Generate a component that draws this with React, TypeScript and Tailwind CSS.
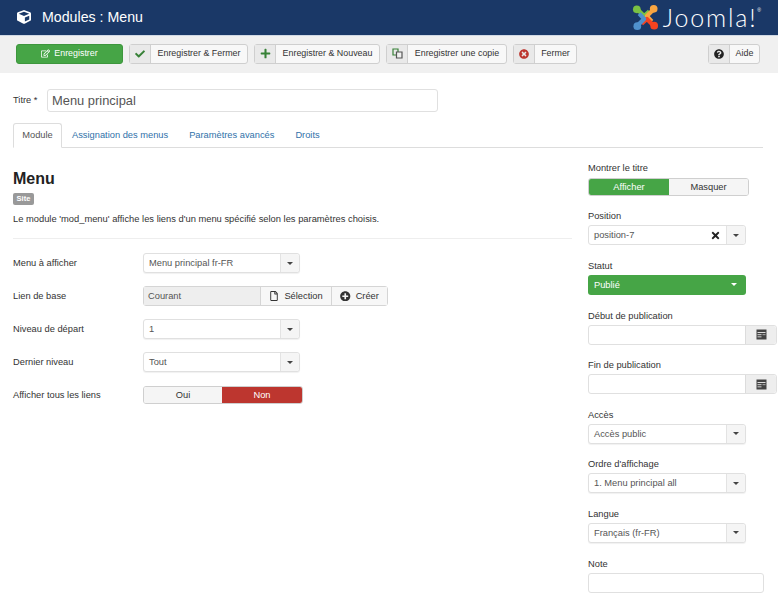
import React from "react";
import { FaCheck, FaPlus, FaTimesCircle, FaQuestionCircle, FaRegEdit, FaRegFile, FaPlusCircle, FaTimes, FaCube } from "react-icons/fa";

function Logo() {
  const arms = ["#7ac143", "#f9a541", "#f44321", "#5091cd"];
  return (
    <svg width="27" height="27" viewBox="0 0 28 28" fill="none">
      {arms.map((c, i) => (
        <g key={c} transform={`rotate(${i * 90} 14 14)`}>
          <path d="M5 5 L12.5 12.5 L18 7.5" stroke={c} strokeWidth="4.4" strokeLinejoin="round" />
          <circle cx="5" cy="5.5" r="4" fill={c} />
        </g>
      ))}
    </svg>
  );
}

function CopyIcon() {
  return (
    <svg width="11" height="11" viewBox="0 0 11 11" fill="none">
      <path d="M1 1 H6 V7 H1 Z" stroke="#378137" strokeWidth="1.2" />
      <path d="M4.5 4 H10 V10 H4.5 Z" stroke="#555" strokeWidth="1.2" fill="#f0f0f0" />
    </svg>
  );
}

function CalendarIcon() {
  return (
    <svg width="11" height="11" viewBox="0 0 11 11">
      <rect x="0.5" y="0.5" width="10" height="10" fill="#444" />
      <rect x="1.5" y="3" width="8" height="1" fill="#ddd" />
      <rect x="1.5" y="5" width="4" height="1.2" fill="#bbb" />
      <rect x="1.5" y="7.2" width="4" height="1.2" fill="#bbb" />
      <rect x="6.5" y="5" width="3" height="1.2" fill="#999" />
    </svg>
  );
}

function Caret() {
  return (
    <span className="w-[19px] flex items-center justify-center bg-[#f5f5f5] border-l border-[#e3e3e3] rounded-r-[3px]">
      <span className="border-x-[3px] border-x-transparent border-t-[3px] border-t-[#444]" />
    </span>
  );
}

function ToolBtn({ icon, label, w }: { icon: React.ReactNode; label: string; w: string }) {
  return (
    <div className={`flex h-[20px] ${w} border border-[#cfcfcf] rounded-[3px] bg-[#f8f8f8] text-[8.9px] text-[#333] items-stretch`}>
      <span className="w-[21px] shrink-0 flex items-center justify-center bg-[#e9e9e9] border-r border-[#d0d0d0]">{icon}</span>
      <span className="flex-1 flex items-center justify-center whitespace-nowrap">{label}</span>
    </div>
  );
}

function Select({ value, w }: { value: string; w: string }) {
  return (
    <div className={`flex h-[20px] ${w} border border-[#e0e0e0] rounded-[3px] bg-white text-[#555] text-[9.3px] items-stretch shadow-[0_1px_1px_rgba(0,0,0,0.06)]`}>
      <span className="flex-1 flex items-center pl-[5px] pt-[2px] whitespace-nowrap">{value}</span>
      <Caret />
    </div>
  );
}

function Field({ label, h = "h-[49.6px]", children }: { label: string; h?: string; children: React.ReactNode }) {
  return (
    <div className={h}>
      <div className="h-[16px] pt-[2px] flex items-center text-[9.3px] text-[#333]">{label}</div>
      <div className="mt-[1px]">{children}</div>
    </div>
  );
}

function DateInput() {
  return (
    <div className="flex h-[20px] w-[189px] border border-[#e0e0e0] rounded-[3px] bg-white">
      <span className="flex-1" />
      <span className="w-[31px] flex items-center justify-center bg-[#eeeeee] border-l border-[#dcdcdc] rounded-r-[3px]">
        <CalendarIcon />
      </span>
    </div>
  );
}

function Row({ label, children }: { label: string; children: React.ReactNode }) {
  return (
    <div className="flex items-center h-[20px] mb-[13px]">
      <div className="w-[130px] pt-[2px] text-[9.3px] text-[#333] whitespace-nowrap">{label}</div>
      {children}
    </div>
  );
}

export default function App() {
  return (
    <div className="w-[778px] h-[600px] overflow-hidden bg-white font-['Liberation_Sans',Arial,sans-serif]">
      <header className="h-[36px] bg-[#1a3867] border-b border-[#d0d8e4] flex items-center justify-between pl-[17px] pr-[17px]">
        <div className="flex items-center text-white">
          <FaCube className="text-[14px]" />
          <span className="ml-[11px] text-[14.2px]">Modules : Menu</span>
        </div>
        <div className="flex items-center text-white">
          <Logo />
          <span className="ml-[4px] font-['Lato',sans-serif] font-light text-[25px] leading-none tracking-[1.8px]">Joomla!</span>
          <span className="text-[5px] -mt-[14px]">®</span>
        </div>
      </header>

      <div className="h-[37px] bg-[#f0f0f0] flex items-center pl-[16px] pr-[18px] pb-[2px]">
        <div className="flex h-[20px] w-[107px] items-center justify-center bg-[#46a546] border border-[#3d963d] rounded-[3px] text-white text-[8.9px]">
          <FaRegEdit className="text-[9px] mr-[4px]" />Enregistrer
        </div>
        <div className="w-[6px]" />
        <ToolBtn w="w-[119px]" icon={<FaCheck className="text-[10px] text-[#378137]" />} label="Enregistrer & Fermer" />
        <div className="w-[6px]" />
        <ToolBtn w="w-[126px]" icon={<FaPlus className="text-[11px] text-[#378137]" />} label="Enregistrer & Nouveau" />
        <div className="w-[6px]" />
        <ToolBtn w="w-[121px]" icon={<CopyIcon />} label="Enregistrer une copie" />
        <div className="w-[6px]" />
        <ToolBtn w="w-[64px]" icon={<FaTimesCircle className="text-[10px] text-[#bd362f]" />} label="Fermer" />
        <div className="flex-1" />
        <ToolBtn w="w-[52px]" icon={<FaQuestionCircle className="text-[10px] text-[#222]" />} label="Aide" />
      </div>

      <div className="flex items-center pl-[13px] mt-[16px]">
        <div className="w-[34px] text-[9.3px] text-[#333]">Titre *</div>
        <div className="w-[391px] h-[23px] border border-[#e0e0e0] rounded-[3px] flex items-center pl-[4px] text-[12.9px] text-[#555]">Menu principal</div>
      </div>

      <div className="mt-[11px] mx-[13px] mr-[15px] h-[25px] border-b border-[#ddd] flex text-[9.3px] text-[#3071a9]">
        <div className="w-[49px] h-[25px] pt-[1px] border border-[#ddd] border-b-white rounded-t-[3px] bg-white text-[#555] flex items-center justify-center">Module</div>
        <div className="ml-[10px] pt-[2px] h-[24px] flex items-center">Assignation des menus</div>
        <div className="ml-[21px] pt-[2px] h-[24px] flex items-center">Paramètres avancés</div>
        <div className="ml-[21px] pt-[2px] h-[24px] flex items-center">Droits</div>
      </div>

      <div className="flex pl-[13px] mt-[12px]">
        <div className="w-[559px]">
          <h1 className="text-[16px] font-bold text-[#222] leading-[18px] mt-[10px]">Menu</h1>
          <div className="mt-[5px] w-[21px] h-[12px] rounded-[2px] bg-[#999] text-white text-[7.5px] font-bold flex items-center justify-center">Site</div>
          <p className="mt-[7px] text-[9.35px] text-[#333] leading-[14px] whitespace-nowrap">Le module 'mod_menu' affiche les liens d'un menu spécifié selon les paramètres choisis.</p>
          <div className="mt-[12px] mb-[14px] border-t border-[#eeeeee]" />
          <Row label="Menu à afficher"><Select w="w-[157px]" value="Menu principal fr-FR" /></Row>
          <Row label="Lien de base">
            <div className="flex h-[20px] w-[245px] border border-[#d5d5d5] rounded-[3px] text-[9.3px] text-[#333] items-stretch">
              <span className="w-[117px] bg-[#eeeeee] text-[#555] flex items-center pl-[4px] pt-[2px] border-r border-[#d5d5d5]">Courant</span>
              <span className="w-[71px] bg-[#f7f7f7] flex items-center justify-center border-r border-[#d5d5d5]"><FaRegFile className="text-[10px] mr-[5px]" /><span className="pt-[2px]">Sélection</span></span>
              <span className="flex-1 bg-[#f7f7f7] flex items-center justify-center"><FaPlusCircle className="text-[10.5px] mr-[5px]" /><span className="pt-[2px]">Créer</span></span>
            </div>
          </Row>
          <Row label="Niveau de départ"><Select w="w-[157px]" value="1" /></Row>
          <Row label="Dernier niveau"><Select w="w-[157px]" value="Tout" /></Row>
          <Row label="Afficher tous les liens">
            <div className="flex h-[18px] w-[160px] text-[9.3px] rounded-[3px] border border-[#cfcfcf] overflow-hidden">
              <span className="w-[78px] pt-[2px] bg-[#f5f5f5] text-[#333] flex items-center justify-center">Oui</span>
              <span className="flex-1 pt-[2px] bg-[#bd362f] text-white flex items-center justify-center">Non</span>
            </div>
          </Row>
        </div>

        <div className="ml-[16px] w-[190px]">
          <Field label="Montrer le titre" h="h-[48.4px]">
            <div className="flex h-[18px] w-[161px] text-[9.3px] rounded-[3px] border border-[#cfcfcf] overflow-hidden mt-[2px]">
              <span className="w-[80px] pt-[2px] bg-[#46a546] text-white flex items-center justify-center">Afficher</span>
              <span className="flex-1 pt-[2px] bg-[#f5f5f5] text-[#333] flex items-center justify-center">Masquer</span>
            </div>
          </Field>
          <Field label="Position">
            <div className="flex h-[20px] w-[158px] border border-[#e0e0e0] rounded-[3px] bg-white text-[#555] text-[9.3px] items-stretch">
              <span className="flex-1 flex items-center pl-[5px] pt-[2px]">position-7</span>
              <span className="flex items-center pr-[5px]"><FaTimes className="text-[11px] text-[#222]" /></span>
              <Caret />
            </div>
          </Field>
          <Field label="Statut">
            <div className="flex h-[20px] w-[158px] rounded-[3px] bg-[#46a546] text-white text-[9.3px] items-center justify-between pl-[6px] pr-[9px]">
              <span className="pt-[2px]">Publié</span>
              <span className="border-x-[3px] border-x-transparent border-t-[3px] border-t-white" />
            </div>
          </Field>
          <Field label="Début de publication"><DateInput /></Field>
          <Field label="Fin de publication"><DateInput /></Field>
          <Field label="Accès"><Select w="w-[158px]" value="Accès public" /></Field>
          <Field label="Ordre d'affichage"><Select w="w-[158px]" value="1. Menu principal all" /></Field>
          <Field label="Langue"><Select w="w-[158px]" value="Français (fr-FR)" /></Field>
          <Field label="Note">
            <div className="h-[20px] w-[176px] border border-[#e0e0e0] rounded-[3px] bg-white" />
          </Field>
        </div>
      </div>
    </div>
  );
}
